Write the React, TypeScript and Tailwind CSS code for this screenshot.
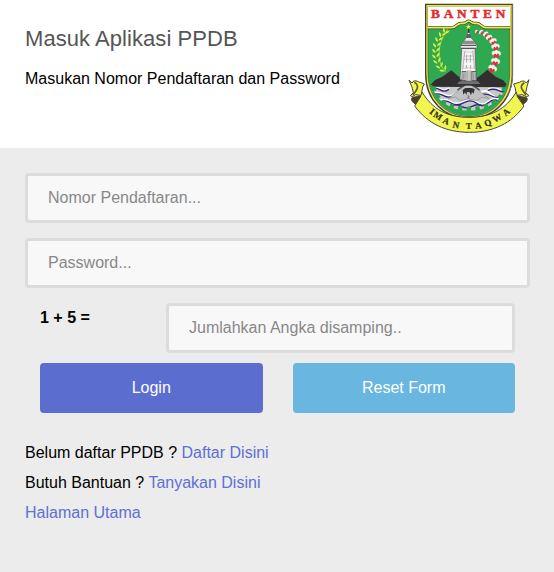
const leaves = [
  [142, 96, 60], [132, 91, -10], [131, 103, 65], [120, 104, -15], [122, 117, 55], [110, 119, -25],
  [117, 133, 45], [104, 136, -35], [114, 149, 40], [102, 153, -40], [114, 165, 35], [102, 170, -45],
  [118, 180, 25], [106, 186, -50], [125, 194, 20], [114, 201, -60], [136, 204, 5], [126, 212, -75],
];

const cotton = [
  [230, 95, 4.5, -55], [244, 97, 6, -50], [258, 103, 7, -40], [268, 114, 8, -30], [280, 125, 9, -22],
  [287, 142, 10, -10], [289, 163, 11, 0], [286, 186, 11, 10], [277, 207, 11, 22],
];

const motto: [string, number, number, number][] = [
  ["I", 96, 335, 38], ["M", 113, 349, 32], ["A", 138, 364, 24], ["N", 168, 376, 12], ["T", 206, 380, 0],
  ["A", 235, 378, -8], ["Q", 264, 369, -20], ["W", 292, 355, -30], ["A", 319, 337, -42],
];

function Emblem() {
  return (
    <svg viewBox="0 0 420 420" className="h-[140px] w-[140px] shrink-0" role="img" aria-label="Banten">
      <defs>
        <clipPath id="inside">
          <path d="M86 88H326V220C326 292 275 348 206 348S86 292 86 220Z" />
        </clipPath>
      </defs>

      <path d="M77 13H337V222C337 300 282 355 207 355S77 300 77 222Z" fill="#eee44d" stroke="#414033" strokeWidth="4" />
      <path d="M84 21H329V220C329 295 278 350 207 350S84 295 84 220Z" fill="#2fa951" stroke="#49502a" strokeWidth="2" />
      <path d="M84 20H330V79H258C244 79 244 67 231 67H224C215 67 213 60 206 60S197 67 189 67H181C168 67 168 79 154 79H84Z" fill="#fff" />
      <path d="M82 83H154C171 83 169 70 183 70H190C199 70 201 63 206 63S214 70 223 70H230C243 70 243 83 259 83H332" fill="none" stroke="#454530" strokeWidth="9" />
      <path d="M81 83H154C171 83 169 70 183 70H190C199 70 201 63 206 63S214 70 223 70H230C243 70 243 83 259 83H333" fill="none" stroke="#f2e94f" strokeWidth="5" />
      <path d="M338 13V223C338 249 332 270 323 288" fill="none" stroke="#777" strokeWidth="3" />
      <text x="93" y="54" textLength="223" lengthAdjust="spacing" className="fill-[#e32c31] font-['Liberation_Serif',serif] text-[40px] font-bold" stroke="#e32c31" strokeWidth="1.5">BANTEN</text>

      <g clipPath="url(#inside)">
        <path d="M86 259H326V350H86Z" fill="#c7c9c9" />
        <g fill="none" stroke="#fff" strokeWidth="5">
          <path d="M91 264Q105 256 119 265T147 264M264 267Q280 260 296 268T327 265" />
          <path d="M94 282Q114 273 131 283T166 281T205 284T240 281T275 284T325 279" />
          <path d="M114 303Q135 294 153 305T192 304T230 306T265 304T305 302" />
        </g>
        <g fill="none" stroke="#382582" strokeWidth="4">
          <path d="M91 268Q105 260 119 269T147 268M264 271Q280 264 296 272T327 269" />
          <path d="M94 286Q114 277 131 287T166 285M240 286Q257 278 275 288T325 283" />
          <path d="M121 306Q135 298 153 309T192 308T230 310T265 308T298 306" />
          <path d="M151 319Q168 310 184 319T216 319T248 318" />
        </g>
        <path d="M86 260L105 240L126 231L154 211L170 225L190 241H222L244 224L262 209L288 231L310 241L326 262Z" fill="#332f31" />
        <path d="M145 296L205 249L268 296L246 292L230 302L205 297L181 302L166 291Z" fill="#bfc1c2" stroke="#777" strokeWidth="1.5" />
        <path d="M205 247L172 270M206 247L239 270" stroke="#49494b" strokeWidth="4" />
        <path d="M188 270L196 264H216L224 268L221 281L216 276L213 286L208 276L201 276L199 286L195 277L190 284Z" fill="#353137" />
        <path d="M203 287L208 289L203 293L209 297" fill="none" stroke="#49404d" strokeWidth="2" />
        <path d="M88 255C92 301 143 341 207 341S322 301 326 255" fill="none" stroke="#2ca44e" strokeWidth="18" />
        <path d="M101 260C105 299 148 327 207 327S309 299 313 260" fill="none" stroke="#2ca44e" strokeWidth="13" strokeDasharray="13 13" />
      </g>

      <path d="M137 216C112 189 107 139 143 87" fill="none" stroke="#bfdb35" strokeWidth="2.5" />
      {leaves.map(([x, y, angle]) => (
        <path key={`${x}-${y}`} d="M0 8Q-6 0 0-9Q6 0 0 8Z" fill="#dded43" transform={`translate(${x} ${y}) rotate(${angle})`} />
      ))}

      <path d="M230 95C276 100 298 143 278 207" fill="none" stroke="#315741" strokeWidth="2" />
      {cotton.map(([x, y, r, angle]) => (
        <g key={`${x}-${y}`} transform={`translate(${x} ${y}) rotate(${angle}) scale(${r / 10})`}>
          <path d="M-12 0Q-13-11-5-9Q0-15 5-9Q14-9 12 1Q5 6 0 3Q-7 6-12 0Z" fill="#f9f5f0" stroke="#b8c7b8" strokeWidth="1" />
          <path d="M-8 1L-3-2L0 2L4-3L8 1Q7 8 0 12Q-8 8-8 1Z" fill="#df3035" />
        </g>
      ))}

      <path d="M205 73L207 78L213 78L208 82L210 87L205 84L200 87L202 82L197 78L203 78Z" fill="#f1ed3c" />
      <path d="M206 87L208 98L212 103L211 111L219 119L227 131L231 136V146L225 149L229 239H180L185 149L181 145V137L186 132L194 119L201 111L200 103L204 98Z" fill="#e8e8e8" stroke="#555" strokeWidth="2" />
      <path d="M206 87V98M201 105H211M201 111H212" stroke="#373539" strokeWidth="4" />
      <path d="M193 122H220L228 132H185Z" fill="#8c8c8c" />
      <path d="M183 136H229M183 145H229" stroke="#555" strokeWidth="4" />
      <path d="M194 151H218L222 239H190Z" fill="#f8f8f8" />
      <path d="M193 156H219M191 168H221M190 178H223M187 204H226" stroke="#b5b5b5" strokeWidth="2" />
      <path d="M200 164V188M211 164V188M199 195V205M212 195V205" stroke="#858585" strokeWidth="2" />
      <path d="M195 152L188 207M218 152L224 207" stroke="#9c9c9c" strokeWidth="2" />
      <path d="M185 213H229V245H185Z" fill="#606163" />
      <path d="M187 217H198V240H187ZM217 217H228V240H217Z" fill="#c9c9c9" />
      <path d="M190 221V239M195 219V239M221 220V240M226 219V239" stroke="#777" strokeWidth="2" />
      <path d="M199 212H214V242H199Z" fill="#eee" />
      <path d="M202 211V242M207 211V242M212 211V242" stroke="#7b7b7b" strokeWidth="2" />
      <path d="M159 248H249V257H159Z" fill="#343033" />
      <path d="M178 244H234L241 252H172Z" fill="#6f7072" />

      <path d="M59 287L42 291Q30 291 36 304L47 314L67 309ZM351 286L372 291Q387 291 380 304L366 317L343 307Z" fill="#4b4028" stroke="#413b26" strokeWidth="2" />
      <g fill="#f1f54f" stroke="#4b482c" strokeWidth="3">
        <path d="M27 240L36 249L41 243Q48 241 55 245L73 252L68 261L65 277L69 287L47 284L37 290L31 287L40 278L36 261Z" />
        <path d="M387 239L379 249L373 243Q365 242 358 247L341 252L345 262L348 278L344 287L366 284L379 290L387 287L377 278L381 260Z" />
        <path d="M66 276C98 328 141 352 207 352S317 328 349 276L352 290L372 318C335 370 278 397 208 397S83 371 44 318L61 291Z" />
      </g>
      <path d="M43 247Q58 255 49 271L39 285M373 248Q358 257 368 271L378 285" fill="none" stroke="#635c2d" strokeWidth="5" />
      <g className="fill-[#343222] font-['Liberation_Serif',serif] text-[27px] font-bold" stroke="#343222" strokeWidth="0.7" textAnchor="middle">
        {motto.map(([letter, x, y, angle]) => (
          <text key={x} transform={`translate(${x} ${y}) rotate(${angle})`} y="8">{letter}</text>
        ))}
      </g>
    </svg>
  );
}

const field = "block h-[50px] w-full rounded border-[3px] border-[#dcdcdc] bg-[#f8f8f8] px-5 text-base text-black outline-none placeholder:text-[#888] placeholder:opacity-100";

export default function App() {
  return (
    <main className="flex h-[572px] w-full flex-col bg-[#ececec] font-['Liberation_Sans',Arial,sans-serif] text-base text-black">
      <header className="flex h-[148px] justify-between bg-white pr-[14px] pl-[25px]">
        <div className="pt-6">
          <h1 className="text-[22px] leading-[30px] tracking-[0.06px] text-[#555]">Masuk Aplikasi PPDB</h1>
          <p className="mt-[10px] leading-[30px]">Masukan Nomor Pendaftaran dan Password</p>
        </div>
        <Emblem />
      </header>
      <form className="pt-[25px] pr-6 pl-[25px]" onSubmit={(e) => e.preventDefault()}>
        <input className={field} placeholder="Nomor Pendaftaran..." />
        <input className={`${field} mt-[15px]`} type="password" placeholder="Password..." />
        <div className="mt-[15px] flex px-[15px]">
          <label htmlFor="sum" className="w-[126px] shrink-0 leading-[30px] font-bold">1 + 5 =</label>
          <input id="sum" className={field} placeholder="Jumlahkan Angka disamping.." />
        </div>
        <div className="mt-[10px] grid grid-cols-2 gap-[30px] px-[15px]">
          <button type="submit" className="h-[50px] rounded bg-[#5c6dd0] text-white">Login</button>
          <button type="reset" className="h-[50px] rounded bg-[#69b6e1] text-white">Reset Form</button>
        </div>
      </form>
      <div className="mt-[25px] pl-[25px] leading-[30px]">
        <p>Belum daftar PPDB ? <a href="#" className="text-[#5c70d5]">Daftar Disini</a></p>
        <p>Butuh Bantuan ? <a href="#" className="text-[#5c70d5]">Tanyakan Disini</a></p>
        <p><a href="#" className="text-[#5c70d5]">Halaman Utama</a></p>
      </div>
    </main>
  );
}
